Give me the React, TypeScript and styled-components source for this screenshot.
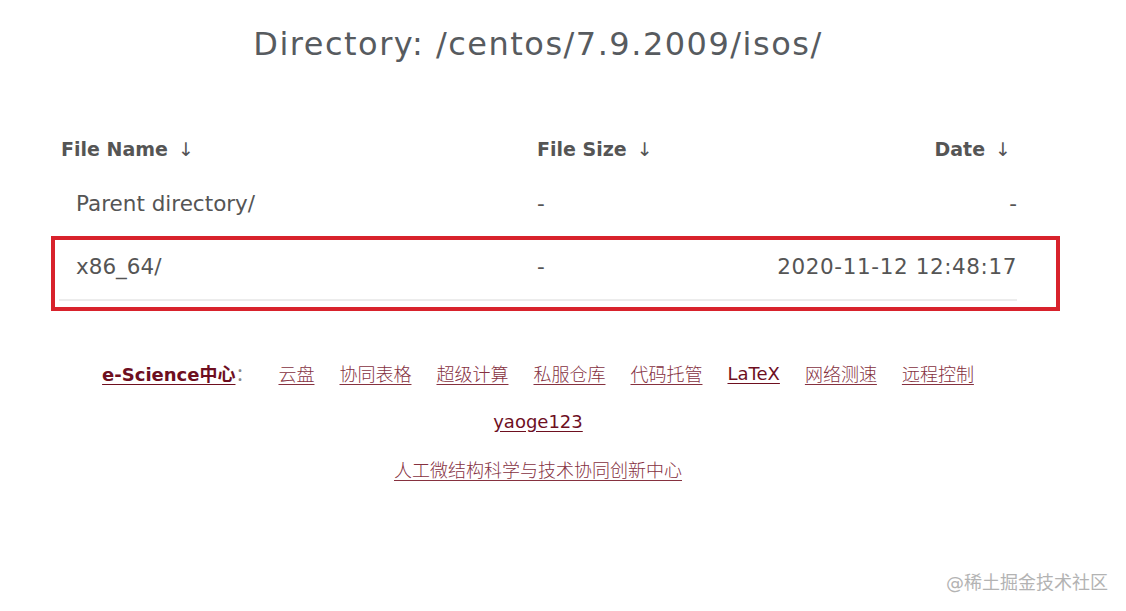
import React from "react";
import styled, { createGlobalStyle } from "styled-components";

const GlobalStyle = createGlobalStyle`
  html, body { margin: 0; padding: 0; background: #ffffff; }
  body { font-family: "DejaVu Sans", "Noto Sans CJK SC", sans-serif; }
`;

const Page = styled.div`
  position: relative;
  width: 1126px;
  height: 611px;
  overflow: hidden;
`;

const Content = styled.main`
  width: 1076px;
  display: flex;
  flex-direction: column;
  align-items: center;
`;

const Title = styled.h1`
  margin: 0;
  padding-top: 25px;
  font-size: 32px;
  letter-spacing: 1.5px;
  line-height: 38px;
  font-weight: normal;
  color: #575b5f;
  text-align: center;
`;

const Table = styled.div`
  width: 958px;
  margin-top: 62px;
  display: flex;
  flex-direction: column;
`;

const Row = styled.div<{ $h: number; $line?: boolean; $head?: boolean }>`
  position: relative;
  display: grid;
  grid-template-columns: 478px 1fr auto;
  align-items: center;
  height: ${(p) => p.$h}px;
  border-bottom: ${(p) => (p.$line ? "2px solid #ececec" : "none")};
  color: #555555;
  font-size: ${(p) => (p.$head ? "19px" : "21.5px")};
  font-weight: ${(p) => (p.$head ? "bold" : "normal")};
`;

const Cell = styled.div<{ $indent?: number; $right?: boolean; $pr?: number; $wide?: boolean }>`
  padding-left: ${(p) => p.$indent ?? 0}px;
  padding-right: ${(p) => p.$pr ?? 0}px;
  text-align: ${(p) => (p.$right ? "right" : "left")};
  letter-spacing: ${(p) => (p.$wide ? "0.6px" : "0")};
  white-space: nowrap;
`;

const Arrow = styled.span`
  font-weight: normal;
  margin-left: 10px;
`;

const Highlight = styled.div`
  position: absolute;
  left: -8px;
  right: -43px;
  top: 2px;
  bottom: -12px;
  border: 4px solid #d8222c;
  pointer-events: none;
`;

const Footer = styled.footer`
  display: flex;
  flex-direction: column;
  align-items: center;
  margin-top: 48px;
`;

const FooterLine = styled.div`
  display: flex;
  align-items: center;
  justify-content: center;
  gap: 25px;
  height: 48px;
  font-size: 18px;
`;

const Label = styled.span`
  color: #7a1224;
`;

const Link = styled.a<{ $strong?: boolean; $dark?: boolean; $light?: boolean }>`
  color: ${(p) => (p.$strong || p.$dark ? "#6e0f1f" : "#86313f")};
  font-weight: ${(p) => (p.$strong ? "bold" : p.$light ? 300 : "normal")};
  text-decoration: underline;
  text-underline-offset: 3px;
  cursor: pointer;
`;

const Colon = styled.span`
  color: #888;
  font-family: "Noto Sans CJK SC", sans-serif;
`;

const Watermark = styled.div`
  position: absolute;
  right: 18px;
  top: 568px;
  font-size: 18px;
  color: #b3b3b3;
  font-family: "DejaVu Sans", "Noto Sans CJK SC", sans-serif;
`;

const links = ["云盘", "协同表格", "超级计算", "私服仓库", "代码托管"];
const links2 = ["网络测速", "远程控制"];

export default function App() {
  return (
    <Page>
      <GlobalStyle />
      <Content>
        <Title>Directory: /centos/7.9.2009/isos/</Title>
        <Table>
          <Row $h={48} $head>
            <Cell $indent={2}>
              File Name<Arrow>↓</Arrow>
            </Cell>
            <Cell>
              File Size<Arrow>↓</Arrow>
            </Cell>
            <Cell $right $pr={6}>
              Date<Arrow>↓</Arrow>
            </Cell>
          </Row>
          <Row $h={61}>
            <Cell $indent={17}>Parent directory/</Cell>
            <Cell>-</Cell>
            <Cell $right>-</Cell>
          </Row>
          <Row $h={65} $line>
            <Cell $indent={17}>x86_64/</Cell>
            <Cell>-</Cell>
            <Cell $right $wide>2020-11-12 12:48:17</Cell>
            <Highlight />
          </Row>
        </Table>
        <Footer>
          <FooterLine>
            <Label>
              <Link $strong>e-Science中心</Link>
              <Colon>：</Colon>
            </Label>
            {links.map((l) => (
              <Link key={l} $light>
                {l}
              </Link>
            ))}
            <Link $dark>LaTeX</Link>
            {links2.map((l) => (
              <Link key={l} $light>
                {l}
              </Link>
            ))}
          </FooterLine>
          <FooterLine>
            <Link $dark>yaoge123</Link>
          </FooterLine>
          <FooterLine>
            <Link $light>人工微结构科学与技术协同创新中心</Link>
          </FooterLine>
        </Footer>
      </Content>
      <Watermark>@稀土掘金技术社区</Watermark>
    </Page>
  );
}
